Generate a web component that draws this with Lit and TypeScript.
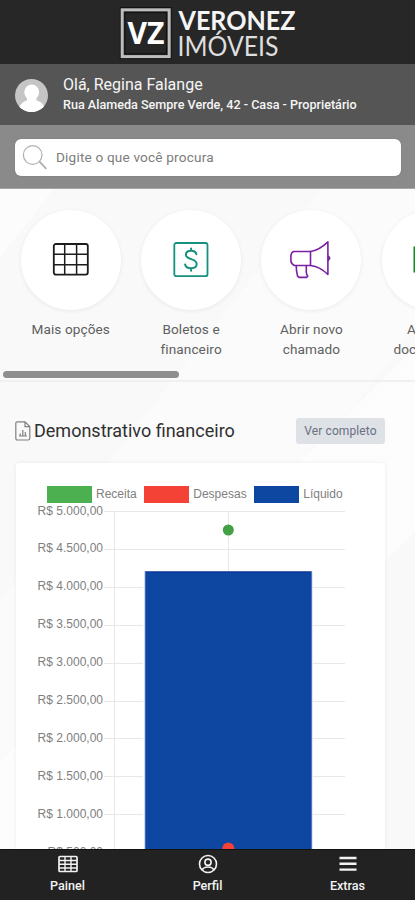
import { LitElement, html, css, svg } from "lit";
import { customElement } from "lit/decorators.js";

const gridIcon = svg`
  <svg width="38" height="36" viewBox="0 0 38 36" fill="none" stroke="#1c1c1f">
    <rect x="1.8" y="2" width="34" height="30.6" rx="2" stroke-width="1.8"/>
    <path d="M12.7 2v30.6M24.6 2v30.6M1.8 12.3h34M1.8 22.7h34" stroke-width="1.5"/>
  </svg>`;

const billIcon = svg`
  <svg width="36" height="36" viewBox="0 0 36 36" fill="none" stroke="#16917f" stroke-width="1.8" stroke-linecap="round">
    <rect x="1.3" y="1" width="33.2" height="33.2" rx="2"/>
    <path d="M23.4 12.2c-.6-2.4-2.7-3.4-5.3-3.4-3.1 0-5.2 1.5-5.2 4 0 2.7 2.3 3.4 5.2 4.3 3.3 1 5.6 2 5.6 5 0 2.7-2.4 4.2-5.7 4.2-3.1 0-5.3-1.3-5.9-3.8M18.1 6.5v2.3M18.1 26.3v2.5" stroke-width="2"/>
  </svg>`;

const hornIcon = svg`
  <svg width="42" height="40" viewBox="0 0 42 40" fill="none" stroke="#7b1fa2" stroke-width="1.6" stroke-linejoin="round">
    <path d="M20.5 11.5V25.5H4.3Q.9 23.5.9 20.5V16.5Q.9 12.5 3.6 11.5Z"/>
    <path d="M20.5 11.5C28 10.500 33.5 6 37.9 1.8V34.5C33.5 30 28 26.5 20.5 25.5"/>
    <path d="M6.2 25.5C6.2 30 6.8 33 7.6 36.200L9 37.400H16.6L17.8 36C16.6 35 16.3 34.500 16.3 32V25.5"/>
    <path d="M38.4 15.8c2 .8 2 4 0 4.8z" fill="#7b1fa2" stroke-width="1"/>
  </svg>`;

const docIcon = svg`
  <svg width="38" height="36" viewBox="0 0 38 36" fill="none" stroke="#0c8c1c" stroke-width="3">
    <rect x="2" y="6" width="34" height="23"/>
  </svg>`;

const shortcuts = [
  { icon: gridIcon, lines: ["Mais opções"] },
  { icon: billIcon, lines: ["Boletos e", "financeiro"] },
  { icon: hornIcon, lines: ["Abrir novo", "chamado"] },
  { icon: docIcon, lines: ["Acessar", "documentos"] },
];

const legend = [
  { name: "Receita", cls: "green" },
  { name: "Despesas", cls: "red" },
  { name: "Líquido", cls: "blue" },
];

const ticks = ["5.000", "4.500", "4.000", "3.500", "3.000", "2.500", "2.000", "1.500", "1.000", "500"];
const STEP = 37.9;

@customElement("app-root")
export class AppRoot extends LitElement {
  static styles = css`
    :host {
      display: flex;
      flex-direction: column;
      position: relative;
      width: 415px;
      height: 900px;
      overflow: hidden;
      font-family: Roboto, "Liberation Sans", sans-serif;
      color: #555;
      background:
        linear-gradient(135deg, transparent 0 58%, rgba(255, 255, 255, 0.6) 58% 72%, transparent 72%),
        linear-gradient(128deg, #fcfcfc 0 18%, #f9f9f9 18% 42%, #fbfbfb 42% 60%, #f9f9f9 60%);
    }
    * { box-sizing: border-box; }
    svg { display: block; flex: none; }
    .brand { height: 64px; flex: none; background: #272727; display: flex; padding: 6px 0 0 119px; }
    .user { height: 61px; flex: none; background: #555; display: flex; padding: 15px 0 0 15px; gap: 15px; color: #f5f5f5; }
    .hello { display: flex; flex-direction: column; }
    .name { font-size: 16px; line-height: 20px; height: 20px; margin-top: -4px; white-space: nowrap; }
    .addr { font-size: 12.6px; line-height: 16px; margin-top: 2px; font-weight: 500; white-space: nowrap; }
    .search { height: 64px; flex: none; background: #8a8a8a; padding: 14px 14px 0 15px; border-bottom: 1px solid #a5a5a5; }
    .field { height: 37px; background: #fff; border-radius: 6px; display: flex; align-items: center; padding-left: 7px; gap: 7px; font-size: 13.6px; color: #7c7c7c; box-shadow: 0 0 1px #555; }
    .field span { letter-spacing: 0.18px; padding-bottom: 2px; }
    .cards { height: 193px; flex: none; border-bottom: 2px solid #f0f0f0; display: flex; flex-direction: column; overflow: hidden; }
    .strip { display: flex; height: 182px; flex: none; padding: 21px 0 0 10.5px; }
    .item { width: 120.4px; flex: none; display: flex; flex-direction: column; align-items: center; }
    .disc { width: 100px; height: 100px; border-radius: 50%; background: #fff; display: flex; align-items: center; justify-content: center; box-shadow: 0 1px 4px rgba(0, 0, 0, 0.07); }
    .label { margin-top: 9px; font-size: 13.6px; line-height: 20px; text-align: center; letter-spacing: 0.1px; color: #606060; }
    .label div { white-space: nowrap; }
    .scroll { width: 176px; height: 7px; margin: 0 0 0 3px; border-radius: 4px; background: #8e8e8e; }
    .heading { display: flex; align-items: center; height: 28px; flex: none; margin: 35px 30px 0 15px; }
    .heading h2 { margin: 0 auto 0 3px; font-size: 18px; font-weight: 400; color: #303030; line-height: 26px; white-space: nowrap; }
    .more { width: 89px; height: 26px; border-radius: 3px; background: #dee1e5; color: #687083; font-size: 12px; line-height: 26px; text-align: center; letter-spacing: 0.1px; white-space: nowrap; }
    .panel { flex: none; height: 440px; margin: 18px 30px 0 16px; background: #fff; border-radius: 3px; box-shadow: 0 0 4px rgba(0, 0, 0, 0.07); font-family: "Liberation Sans", sans-serif; font-size: 12px; color: #808080; }
    .legend { display: flex; padding: 23px 0 0 31px; height: 41px; gap: 7.6px; }
    .entry { display: flex; gap: 4px; line-height: 17px; }
    .swatch { width: 45px; height: 17px; }
    .green { background: #4caf50; }
    .red { background: #f44336; }
    .blue { background: #0d47a1; }
    .plot text { font-size: 12px; fill: #808080; }
    nav { position: absolute; left: 0; right: 0; bottom: 0; height: 51px; background: #222; border-top: 1px solid #111; display: flex; justify-content: center; color: #f2f2f2; font-size: 12.6px; font-weight: 500; }
    .tab { width: 140px; flex: none; display: flex; flex-direction: column; align-items: center; padding-top: 4px; }
    .tab span { line-height: 16px; margin-top: 4px; }
  `;

  render() {
    return html`
      <header class="brand">
        <svg width="182" height="56" viewBox="0 0 182 56" font-family="Lato, sans-serif">
          <rect x="1.3" y="1.6" width="50.8" height="51" fill="#151515" stroke="#111" />
          <rect x="3.2" y="3.8" width="47" height="46.8" fill="#262626" stroke="#bdbdbd" stroke-width="3" />
          <rect x="6" y="6.6" width="41.4" height="41.2" fill="none" stroke="#111" stroke-width="1" />
          <text x="8.4" y="37.5" font-family="Open Sans" font-weight="700" font-size="30" fill="#fff" textLength="37" lengthAdjust="spacingAndGlyphs">VZ</text>
          <text x="59.5" y="24.4" font-weight="700" font-size="26" fill="#f5f5f5" textLength="117" lengthAdjust="spacingAndGlyphs">VERONEZ</text>
          <text x="58.5" y="49.5" font-size="26" fill="#dedede" textLength="101" lengthAdjust="spacingAndGlyphs">IMÓVEIS</text>
        </svg>
      </header>

      <section class="user">
        <svg width="33" height="33" viewBox="0 0 33 33">
          <defs><clipPath id="c"><circle cx="16.5" cy="16.5" r="16.5" /></clipPath></defs>
          <circle cx="16.5" cy="16.5" r="16.5" fill="#c5c5c5" />
          <g clip-path="url(#c)" fill="#fff">
            <ellipse cx="16.7" cy="13.2" rx="7.4" ry="7.8" />
            <path d="M12 18h9.4v3.500c5 1 8 4.500 9 11.500H3c.5-6 4-10.500 9-11.500z" />
          </g>
        </svg>
        <div class="hello">
          <div class="name">Olá, Regina Falange</div>
          <div class="addr">Rua Alameda Sempre Verde, 42 - Casa - Proprietário</div>
        </div>
      </section>

      <section class="search">
        <div class="field">
          <svg width="27" height="27" viewBox="0 0 27 27" fill="none" stroke="#b0b0b0" stroke-width="1.2">
            <circle cx="10.7" cy="11" r="9.3" />
            <path d="M17.5 17.6L24.3 24.8" stroke-width="1.9" />
          </svg>
          <span>Digite o que você procura</span>
        </div>
      </section>

      <section class="cards">
        <div class="strip">
          ${shortcuts.map((s) => html`
            <div class="item">
              <div class="disc">${s.icon}</div>
              <div class="label">${s.lines.map((l) => html`<div>${l}</div>`)}</div>
            </div>`)}
        </div>
        <div class="scroll"></div>
      </section>

      <section class="heading">
        <svg width="16" height="20" viewBox="0 0 16 20" fill="none" stroke="#808080" stroke-width="1.2">
          <path d="M2.5.8H10l4.8 4.8V17.200q0 1.800-1.800 1.800H2.500Q.8 19 .8 17.200V2.500Q.8.8 2.500.8zM10 .8v4.800h4.800" />
          <path d="M5.2 14.600v-2M7.800 14.600V9M10.300 14.600v-3.500M4 15h8" />
        </svg>
        <h2>Demonstrativo financeiro</h2>
        <div class="more">Ver completo</div>
      </section>

      <section class="panel">
        <div class="legend">
          ${legend.map((e) => html`<div class="entry"><div class="swatch ${e.cls}"></div>${e.name}</div>`)}
        </div>
        <svg class="plot" width="369" height="399" viewBox="0 0 369 399">
          <g stroke="#e8e8e8">
            ${ticks.map((_, i) => svg`<path d="M88 ${Math.round(7 + i * STEP) + 0.5}H329" />`)}
            <path d="M98.5 7V399M212.5 7V399" />
          </g>
          ${ticks.map((t, i) => svg`<text x="87" y=${10.5 + i * STEP} text-anchor="end">R$ ${t},00</text>`)}
          <rect x="127" y="67" width="170" height="332" fill="#fff" />
          <rect x="129" y="67.5" width="167" height="332" fill="#0d47a1" />
          <path d="M129 68H295.5" stroke="#0a2f96" />
          <path d="M129 67.5V399M295.8 67.5V399" stroke="#8d9ad8" stroke-width=".8" />
          <circle cx="212.3" cy="26" r="5.5" fill="#43a047" />
          <circle cx="212.3" cy="344.5" r="6" fill="#f44336" />
        </svg>
      </section>

      <nav>
        <div class="tab">
          <svg width="22" height="20" viewBox="0 0 22 20" fill="none" stroke="#f2f2f2">
            <rect x="2" y="2.500" width="18" height="15" rx="1" stroke-width="1.7" />
            <path d="M8 2.500v15M14 2.500v15M2 6.500h18M2 10.300h18M2 14h18" stroke-width="1.4" />
          </svg>
          <span>Painel</span>
        </div>
        <div class="tab">
          <svg width="20" height="20" viewBox="0 0 20 20" fill="none" stroke="#f2f2f2" stroke-width="1.6">
            <circle cx="10" cy="10" r="8.500" />
            <circle cx="10" cy="8.200" r="3.100" />
            <path d="M4.300 16c.8-2.500 3-3 5.700-3s4.900.5 5.700 3" />
          </svg>
          <span>Perfil</span>
        </div>
        <div class="tab">
          <svg width="20" height="20" viewBox="0 0 20 20" stroke="#f2f2f2" stroke-width="2.4">
            <path d="M1.500 4h17M1.500 9.800h17M1.500 15.600h17" />
          </svg>
          <span>Extras</span>
        </div>
      </nav>
    `;
  }
}
